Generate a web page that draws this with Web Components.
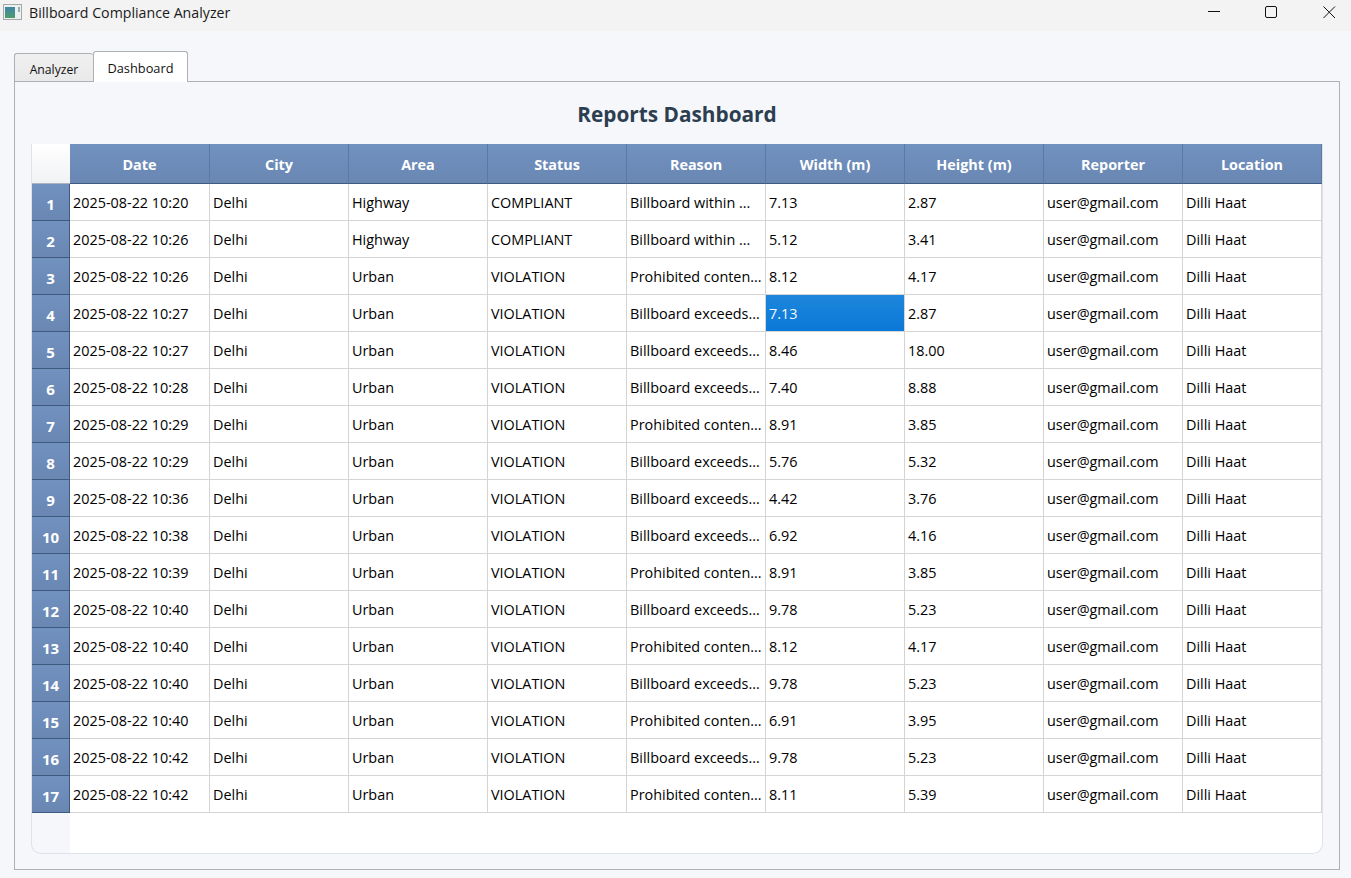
<!DOCTYPE html>
<html>
<head>
<meta charset="utf-8">
<title>Billboard Compliance Analyzer</title>
<style>
  html, body { margin: 0; height: 100%; background: #f5f7fb; font-family: "Open Sans", "Noto Sans", sans-serif; }
</style>
</head>
<body>
<title-bar title="Billboard Compliance Analyzer"></title-bar>
<tab-view>
  <h-title slot="pane">Reports Dashboard</h-title>
  <report-table slot="pane"></report-table>
</tab-view>

<script>
class TitleBar extends HTMLElement {
  constructor() {
    super();
    this.attachShadow({ mode: 'open' });
    this.shadowRoot.innerHTML = `
      <style>
        :host { display: flex; align-items: center; height: 31px; background: #f3f3f3; color: #1a1a1a; font-size: 14.2px; }
        .icon { margin: 0 6px 6px 3px; flex: none; display: block; }
        .name { flex: 1; padding-bottom: 7px; }
        .btns { display: flex; align-self: flex-start; }
        .btns svg { display: block; }
      </style>
      <svg class="icon" width="20" height="17" viewBox="0 0 20 17">
        <defs><linearGradient id="g" x1="0" y1="0" x2="0" y2="1"><stop offset="0" stop-color="#3f86a8"/><stop offset="1" stop-color="#4f9c6c"/></linearGradient></defs>
        <rect x="0.5" y="0.5" width="18" height="15" fill="#eef0f0" stroke="#a8a8a8"/>
        <rect x="2" y="3" width="10" height="11" fill="url(#g)"/>
        <rect x="15" y="3" width="2" height="5" fill="#8fb3b5"/>
      </svg>
      <span class="name">${this.getAttribute('title')}</span>
      <div class="btns">
        <svg width="58" height="26" viewBox="0 0 58 26"><path d="M7 11.500H19" stroke="#111" stroke-width="1" fill="none"/></svg>
        <svg width="60" height="26" viewBox="0 0 60 26"><rect x="6.500" y="6.500" width="11" height="11" rx="1.500" stroke="#111" stroke-width="1" fill="none"/></svg>
        <svg width="32" height="26" viewBox="0 0 32 26"><path d="M4.500 6.500L16 18M16 6.500L4.500 18" stroke="#111" stroke-width="1" fill="none"/></svg>
      </div>
    `;
  }
}

class TabView extends HTMLElement {
  constructor() {
    super();
    this.attachShadow({ mode: 'open' });
    this.shadowRoot.innerHTML = `
      <style>
        :host { display: block; padding: 20px 11px 0 14px; font-size: 12.800px; color: #111; }
        .tabs { display: flex; align-items: flex-end; height: 30px; position: relative; z-index: 1; }
        .tab { box-sizing: border-box; border: 1px solid #adb0b5; border-bottom: none; border-radius: 3px 3px 0 0; text-align: center; }
        .off { width: 79px; height: 28px; line-height: 32px; background: linear-gradient(#f0f0f0, #e9e9e9); border-right: none; font-size: 12.200px; }
        .on { width: 95px; height: 31px; line-height: 33px; background: #fff; margin-bottom: -1px; }
        .pane { box-sizing: border-box; height: 789px; border: 1px solid #adb0b5; padding: 12px 16px 16px 16px; }
      </style>
      <div class="tabs"><div class="tab off">Analyzer</div><div class="tab on">Dashboard</div></div>
      <div class="pane"><slot name="pane"></slot></div>
    `;
  }
}

class HTitle extends HTMLElement {
  constructor() {
    super();
    this.attachShadow({ mode: 'open' });
    this.shadowRoot.innerHTML = `
      <style>
        :host { display: block; height: 50px; line-height: 40px; text-align: center; font-size: 20.800px; font-weight: 700; color: #2c3e50; }
      </style>
      <slot></slot>
    `;
  }
}

const COLS = ['Date', 'City', 'Area', 'Status', 'Reason', 'Width (m)', 'Height (m)', 'Reporter', 'Location'];
const BE = 'Billboard exceeds...', PC = 'Prohibited conten...', BW = 'Billboard within ...';
const ROWS = [
  ['10:20', 'Highway', 'COMPLIANT', BW, '7.13', '2.87'],
  ['10:26', 'Highway', 'COMPLIANT', BW, '5.12', '3.41'],
  ['10:26', 'Urban', 'VIOLATION', PC, '8.12', '4.17'],
  ['10:27', 'Urban', 'VIOLATION', BE, '7.13', '2.87'],
  ['10:27', 'Urban', 'VIOLATION', BE, '8.46', '18.00'],
  ['10:28', 'Urban', 'VIOLATION', BE, '7.40', '8.88'],
  ['10:29', 'Urban', 'VIOLATION', PC, '8.91', '3.85'],
  ['10:29', 'Urban', 'VIOLATION', BE, '5.76', '5.32'],
  ['10:36', 'Urban', 'VIOLATION', BE, '4.42', '3.76'],
  ['10:38', 'Urban', 'VIOLATION', BE, '6.92', '4.16'],
  ['10:39', 'Urban', 'VIOLATION', PC, '8.91', '3.85'],
  ['10:40', 'Urban', 'VIOLATION', BE, '9.78', '5.23'],
  ['10:40', 'Urban', 'VIOLATION', PC, '8.12', '4.17'],
  ['10:40', 'Urban', 'VIOLATION', BE, '9.78', '5.23'],
  ['10:40', 'Urban', 'VIOLATION', PC, '6.91', '3.95'],
  ['10:42', 'Urban', 'VIOLATION', BE, '9.78', '5.23'],
  ['10:42', 'Urban', 'VIOLATION', PC, '8.11', '5.39'],
];

class ReportTable extends HTMLElement {
  constructor() {
    super();
    this.attachShadow({ mode: 'open' });
    let cells = '<div class="corner"></div>';
    COLS.forEach(c => { cells += `<div class="head">${c}</div>`; });
    ROWS.forEach((r, i) => {
      const vals = ['2025-08-22 ' + r[0], 'Delhi', r[1], r[2], r[3], r[4], r[5], 'user@gmail.com', 'Dilli Haat'];
      cells += `<div class="num">${i + 1}</div>`;
      vals.forEach((v, j) => {
        cells += `<div class="cell${i === 3 && j === 5 ? ' sel' : ''}">${v}</div>`;
      });
    });
    this.shadowRoot.innerHTML = `
      <style>
        :host { display: block; box-sizing: border-box; height: 710px; background: linear-gradient(90deg, #f5f7fb 38px, #fff 38px); border: 1px solid #dfe2e8; border-top: none; border-radius: 0 0 10px 10px; overflow: hidden; font-size: 14.400px; color: #000; }
        .grid { display: grid; grid-template-columns: 38px 140px repeat(8, 139px); grid-template-rows: 40px repeat(17, 37px); }
        .corner { background: linear-gradient(#fff, #f1f2f4); border-bottom: 1px solid #aeb4bd; box-sizing: border-box; }
        .head { box-sizing: border-box; background: linear-gradient(#7191bf, #6a87b3); border-right: 1px solid #5a7aa6; border-bottom: 1px solid #3f5a80; color: #fff; font-weight: 700; text-align: center; line-height: 41px; }
        .num { box-sizing: border-box; background: linear-gradient(#7191bf, #6a87b3); border-right: 1px solid #3f5a80; border-bottom: 1px solid #3f5a80; color: #fff; font-weight: 700; text-align: center; line-height: 40px; font-size: 15px; }
        .cell { box-sizing: border-box; background: #fff; border-right: 1px solid #d4d4d4; border-bottom: 1px solid #d4d4d4; padding-left: 3px; line-height: 37px; white-space: nowrap; overflow: hidden; }
        .cell.sel { background: linear-gradient(#1e87dc, #0a78d7); color: #f4f8fc; }
      </style>
      <div class="grid">${cells}</div>
    `;
  }
}

customElements.define('title-bar', TitleBar);
customElements.define('tab-view', TabView);
customElements.define('h-title', HTitle);
customElements.define('report-table', ReportTable);
</script>
</body>
</html>
